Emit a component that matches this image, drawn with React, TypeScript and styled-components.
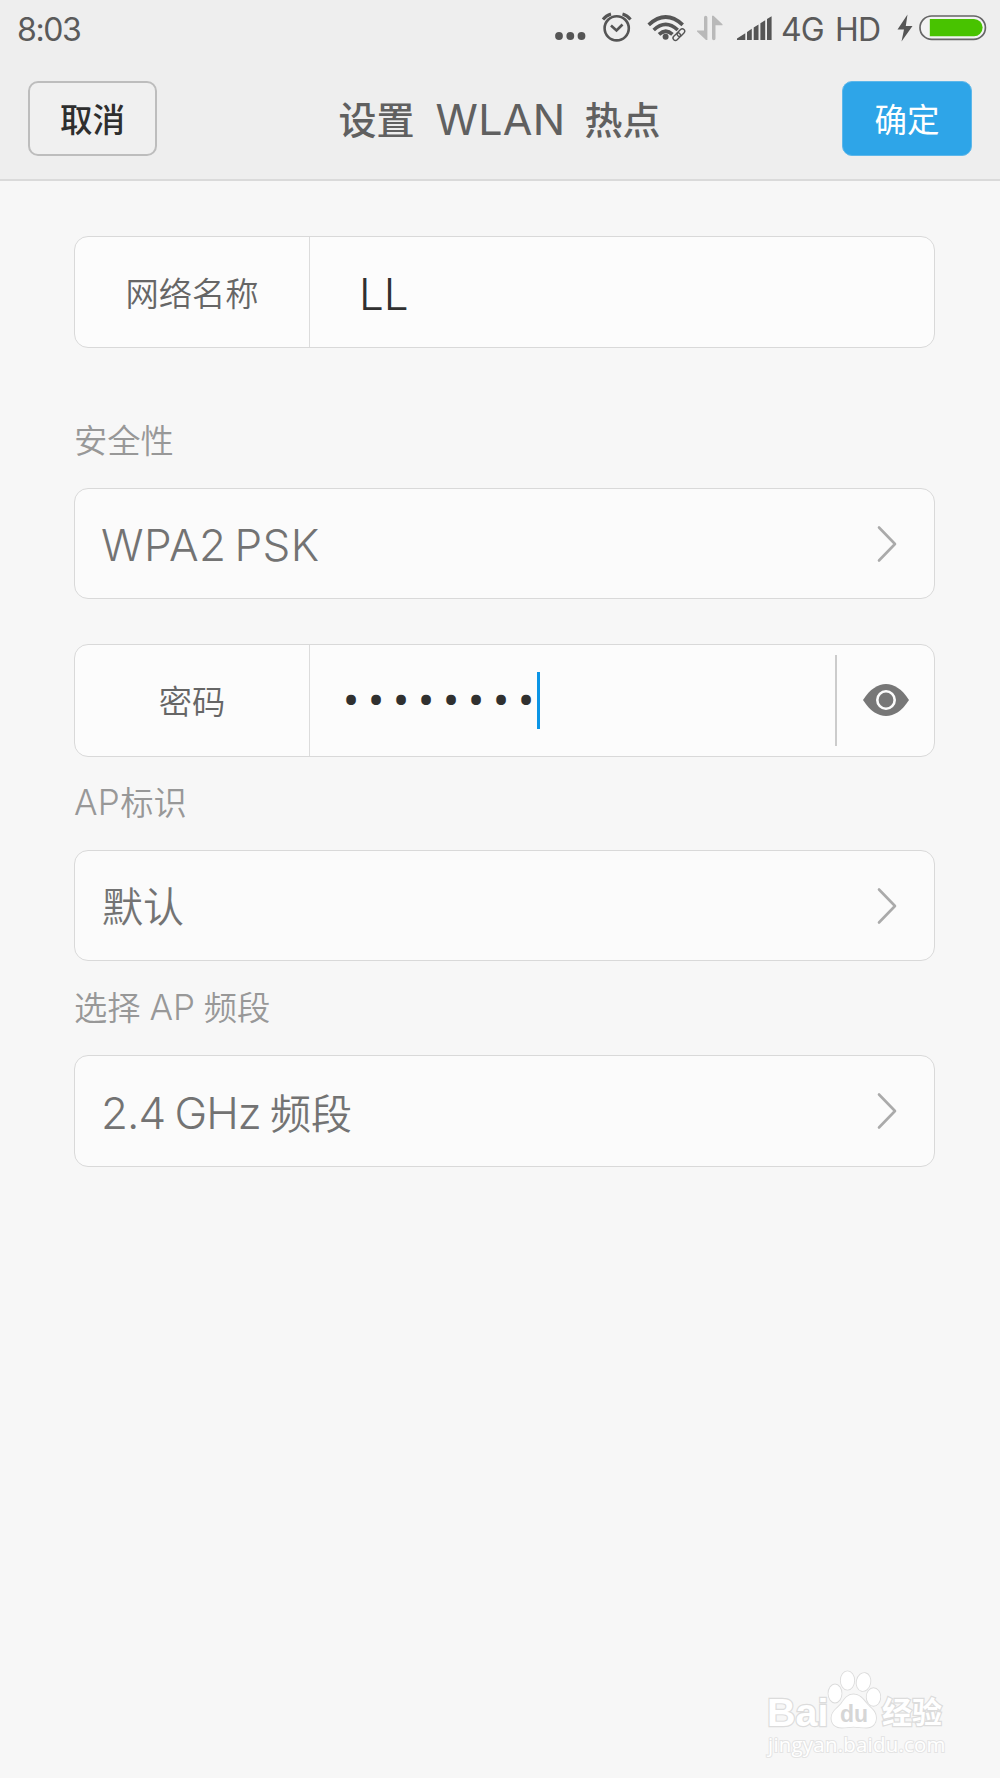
import React from "react";
import styled, { createGlobalStyle } from "styled-components";

const GlobalStyle = createGlobalStyle`
  * { box-sizing: border-box; }
  body {
    margin: 0;
    background: #f7f7f7;
    font-family: "Noto Sans CJK SC", "Liberation Sans", sans-serif;
  }
`;

const Screen = styled.div`
  width: 1000px;
  height: 1778px;
  display: flex;
  flex-direction: column;
  background: #f7f7f7;
  overflow: hidden;
  white-space: pre;
`;

const Top = styled.header`
  height: 181px;
  flex: none;
  background: #eeeeee;
  border-bottom: 2px solid #dadada;
`;

const StatusBar = styled.div`
  height: 57px;
  display: flex;
  align-items: center;
  color: #5a5a5a;
`;

const Latin = styled.span<{ $size: number; $spacing?: number; $weight?: number; $word?: number }>`
  font-family: Inter, "Liberation Sans", sans-serif;
  font-size: ${(p) => p.$size}px;
  font-weight: ${(p) => p.$weight ?? 400};
  letter-spacing: ${(p) => p.$spacing ?? 0}px;
  word-spacing: ${(p) => p.$word ?? 0}px;
  line-height: 1;
`;

const Clock = styled(Latin)`
  margin: 2px auto 0 17px;
`;

const Network = styled(Latin)<{ $gap: number; $width: number }>`
  margin: 2px 0 0 ${(p) => p.$gap}px;
  width: ${(p) => p.$width}px;
`;

const Glyph = styled.svg<{ $gap?: number }>`
  display: block;
  flex: none;
  margin-left: ${(p) => p.$gap ?? 0}px;
`;

const StatusIconRow = styled.div`
  display: flex;
  align-items: center;
  padding-right: 13px;
`;

const NavBar = styled.div`
  display: flex;
  align-items: center;
  justify-content: space-between;
  height: 122px;
  padding: 0 28px 0 28px;
`;

const Button = styled.button<{ $primary?: boolean }>`
  width: ${(p) => (p.$primary ? 130 : 129)}px;
  height: 75px;
  padding: 0;
  border: ${(p) => (p.$primary ? "1px solid #5db7ea" : "2px solid #bdbdbd")};
  border-radius: 10px;
  background: ${(p) => (p.$primary ? "#2ea5e8" : "#f0f0f0")};
  color: ${(p) => (p.$primary ? "#ffffff" : "#2e2e2e")};
  font-family: inherit;
  font-size: 32.5px;
  font-weight: ${(p) => (p.$primary ? 400 : 500)};
  line-height: 48px;
`;

const Title = styled.h1`
  display: flex;
  align-items: baseline;
  margin: 0;
  color: #606060;
  font-size: 38px;
  font-weight: 500;
  line-height: 60px;
`;

const TitleLatin = styled(Latin)`
  position: relative;
  top: 1px;
  margin: 0 19px 0 21px;
`;

const Form = styled.main`
  display: flex;
  flex-direction: column;
  padding: 55px 65px 0 74px;
`;

const Card = styled.section<{ $height?: number; $select?: boolean }>`
  display: flex;
  align-items: stretch;
  height: ${(p) => p.$height ?? 112}px;
  border: 1px solid #d9d9d9;
  border-radius: 14px;
  background: ${(p) => (p.$select ? "#fbfbfb" : "#fcfcfc")};
`;

const FieldName = styled.label`
  width: 235px;
  display: flex;
  align-items: center;
  justify-content: center;
  padding-bottom: 2px;
  border-right: 1px solid #dcdcdc;
  color: #666666;
  font-size: 33.3px;
  font-weight: 350;
`;

const FieldValue = styled.div<{ $left: number }>`
  flex: 1;
  display: flex;
  align-items: center;
  padding-left: ${(p) => p.$left}px;
  color: #303030;
`;

const NetworkName = styled(Latin)`
  padding-top: 4px;
`;

const Mask = styled.span`
  padding-top: 3px;
  font-family: Roboto, sans-serif;
  font-size: 48px;
  line-height: 1;
  letter-spacing: 8.8px;
`;

const Caret = styled.span`
  width: 3px;
  height: 57px;
  margin-left: -6px;
  background: #0b95e6;
`;

const Reveal = styled.div`
  width: 99px;
  height: 91px;
  align-self: center;
  display: flex;
  align-items: center;
  justify-content: center;
  padding-bottom: 1px;
  border-left: 2px solid #cccccc;
`;

const Caption = styled.div<{ $height: number }>`
  height: ${(p) => p.$height}px;
  display: flex;
  align-items: flex-end;
  padding-bottom: 29px;
  color: #989898;
  font-size: 33.3px;
  font-weight: 350;
  line-height: 40px;
`;

const Line = styled.span`
  display: flex;
  align-items: baseline;
`;

const Choice = styled.div<{ $lift?: number }>`
  flex: 1;
  display: flex;
  align-items: center;
  justify-content: space-between;
  padding: 0 36px 0 26px;
  color: #737373;
  font-size: 41px;
  font-weight: 350;
  line-height: 60px;

  & > span {
    margin-top: ${(p) => -(p.$lift ?? 0)}px;
  }
`;

const ChoiceHan = styled.span`
  padding-left: 1px;
`;

const Gap = styled.div`
  height: 45px;
`;

const Watermark = styled.footer`
  width: 182px;
  margin: auto 54px 20px auto;
  display: flex;
  flex-direction: column;
  color: #ffffff;
  paint-order: stroke fill;
  -webkit-text-stroke: 2.4px #dcdcdc;
`;

const Brand = styled.div`
  display: flex;
  align-items: flex-end;
  height: 62px;
`;

const BrandLatin = styled.span`
  width: 63px;
  padding-left: 3px;
  font: bold 39.5px/36px "Liberation Sans", sans-serif;
`;

const BrandHan = styled.span`
  margin-left: 1px;
  padding-bottom: 2px;
  font-size: 30px;
  font-weight: 700;
  line-height: 36px;
`;

const Site = styled.div`
  padding-left: 4px;
  font: 400 20.4px/28px "Open Sans", sans-serif;
  letter-spacing: 0.25px;
  -webkit-text-stroke: 2px #e4e4e4;
`;

const Chevron = () => (
  <svg width="24" height="40" viewBox="0 0 24 40" fill="none" stroke="#aaaaaa" strokeWidth="2.6" strokeLinecap="round" strokeLinejoin="round">
    <path d="M5 3.500 21 20 5 36.500" />
  </svg>
);

const StatusIcons = () => (
  <>
    <Glyph width="31" height="57" viewBox="555 0 31 57" fill="#555">
      <circle cx="559" cy="36" r="3.9" />
      <circle cx="570.300" cy="36" r="3.9" />
      <circle cx="581.500" cy="36" r="3.9" />
    </Glyph>
    <Glyph $gap={15} width="31" height="57" viewBox="601 0 31 57" fill="none" stroke="#555">
      <circle cx="616.700" cy="28.300" r="12.100" strokeWidth="2.600" />
      <path d="M611 25.500l5.500 5 6-6" strokeWidth="2.600" />
      <path d="M603 19.500q3-4 8-5.500M622.500 14q5 1.500 8 5.500" strokeWidth="3" />
    </Glyph>
    <Glyph $gap={15} width="39" height="57" viewBox="647 0 39 57" fill="none" stroke="#555" strokeWidth="3.700">
      <path d="M648.700 24.800q17-15.600 34 0" />
      <path d="M653.700 30q12-11.200 24 0" />
      <path d="M659 34.300q6.800-6.200 13.500 0" />
      <circle cx="665.600" cy="36.800" r="3" fill="#555" stroke="none" />
      <g transform="rotate(-45 679 34.500)" strokeWidth="1.400">
        <rect x="671.600" y="32.100" width="8.600" height="4.800" rx="2.400" stroke="#eee" strokeWidth="3.600" />
        <rect x="671.600" y="32.100" width="8.600" height="4.800" rx="2.400" />
        <rect x="677.400" y="32.100" width="8.600" height="4.800" rx="2.400" />
      </g>
    </Glyph>
    <Glyph $gap={10} width="27" height="57" viewBox="696 0 27 57" fill="#b9b9b9">
      <path d="M704 17.500q0-1.700 1.700-1.700t1.700 1.700V40H706l-9-8.500v-1h7z" />
      <path d="M712 15.700h1.500l9 8.500v1h-7V38.500q0 1.700-1.700 1.700T712 38.500z" />
    </Glyph>
    <Glyph $gap={13} width="37" height="57" viewBox="735 0 37 57" fill="#555">
      <path d="M736 40v-1.500l8.300-5.300V40zM746 40v-8l4.800-3.200V40zM752.700 40V27.500l4.800-3V40zM759.400 40V23.200l4.800-3V40zM766 40V19l4.600-2.800V40z" />
    </Glyph>
    <Network $size={32} $gap={8} $width={57} $spacing={-0.8}>4G</Network>
    <Network $size={32} $gap={-3} $width={46} $spacing={-0.8}>HD</Network>
    <Glyph $gap={15} width="17" height="57" viewBox="896 0 17 57" fill="#555">
      <path d="M907.500 14.500 897.500 29.500h6.500l-2.500 12L912.500 26h-6.700z" />
    </Glyph>
    <Glyph $gap={6} width="68" height="57" viewBox="919 0 68 57">
      <rect x="920" y="16" width="65.400" height="23.400" rx="11.700" fill="#f3f3f3" stroke="#666" strokeWidth="1.700" />
      <path d="M929.800 19H974a8.600 8.600 0 0 1 0 17.200H929.800z" fill="#48c300" />
    </Glyph>
  </>
);

const Eye = () => (
  <svg width="48" height="36" viewBox="0 0 48 36">
    <path d="M1 18C8 7 16 2 24 2s16 5 23 16C40 29 32 34 24 34S8 29 1 18Z" fill="#777" />
    <circle cx="24" cy="18" r="8.700" fill="#777" stroke="#fcfcfc" strokeWidth="2.600" />
  </svg>
);

const PawText = styled.text`
  font: bold 23px "Liberation Sans", sans-serif;
  -webkit-text-stroke: 0;
`;

const Paw = () => (
  <svg width="54" height="62" viewBox="827 1668 54 62" fill="#fff" stroke="#dcdcdc" strokeWidth="1.800">
    <ellipse cx="835" cy="1693.500" rx="6.500" ry="9" />
    <ellipse cx="847.500" cy="1680.500" rx="6.700" ry="9.200" />
    <ellipse cx="863.500" cy="1682" rx="6.800" ry="9" transform="rotate(12 863.500 1682)" />
    <ellipse cx="873.500" cy="1697" rx="6.800" ry="8.800" />
    <path d="M853.500 1694.500c-6 0-9 4.500-12 9-4 5-10 7.500-10 14.500 0 6 4 9.500 10 9.500 5 0 8-.8 12-.8s8 .8 13 .8c6 0 9.500-4 9.500-9.500 0-7-5-9.500-9.500-14.500-4-5-7-9-13-9Z" />
    <PawText x="840" y="1722" fill="#d6d6d6" stroke="none">du</PawText>
  </svg>
);

export default function App() {
  return (
    <>
      <GlobalStyle />
      <Screen>
        <Top>
          <StatusBar>
            <Clock $size={32} $spacing={-1.4}>8:03</Clock>
            <StatusIconRow>
              <StatusIcons />
            </StatusIconRow>
          </StatusBar>
          <NavBar>
            <Button>取消</Button>
            <Title>
              设置<TitleLatin $size={43} $weight={400} $spacing={0.3}>WLAN</TitleLatin>热点
            </Title>
            <Button $primary>确定</Button>
          </NavBar>
        </Top>
        <Form>
          <Card>
            <FieldName>网络名称</FieldName>
            <FieldValue $left={49}>
              <NetworkName $size={44} $weight={350} $spacing={-0.2}>LL</NetworkName>
            </FieldValue>
          </Card>
          <Caption $height={140}>安全性</Caption>
          <Card $height={111} $select>
            <Choice $lift={-2}>
              <Latin $size={44} $weight={350} $spacing={0.5} $word={-5}>WPA2 PSK</Latin>
              <Chevron />
            </Choice>
          </Card>
          <Gap />
          <Card $height={113}>
            <FieldName>密码</FieldName>
            <FieldValue $left={33}>
              <Mask>••••••••</Mask>
              <Caret />
            </FieldValue>
            <Reveal>
              <Eye />
            </Reveal>
          </Card>
          <Caption $height={93}>
            <Line><Latin $size={35} $weight={350} $spacing={0.3}>AP</Latin>标识</Line>
          </Caption>
          <Card $height={111} $select>
            <Choice $lift={4}>
              <ChoiceHan>默认</ChoiceHan>
              <Chevron />
            </Choice>
          </Card>
          <Caption $height={94}>
            <Line>选择<Latin $size={35} $weight={350} $word={-1}> AP </Latin>频段</Line>
          </Caption>
          <Card $height={112} $select>
            <Choice $lift={1}>
              <Line><Latin $size={44} $weight={350} $spacing={-1} $word={-2}>2.4 GHz </Latin>频段</Line>
              <Chevron />
            </Choice>
          </Card>
        </Form>
        <Watermark>
          <Brand>
            <BrandLatin>Bai</BrandLatin>
            <Paw />
            <BrandHan>经验</BrandHan>
          </Brand>
          <Site>jingyan.baidu.com</Site>
        </Watermark>
      </Screen>
    </>
  );
}
